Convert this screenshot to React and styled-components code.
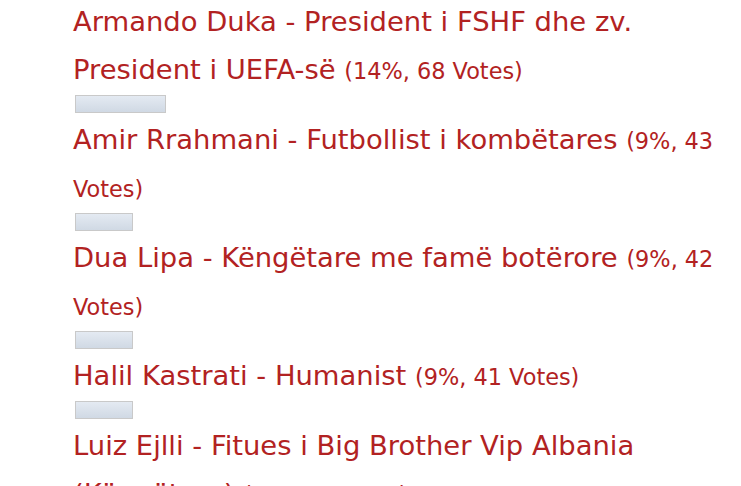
import React from "react";
import styled, { createGlobalStyle } from "styled-components";

const Global = createGlobalStyle`
  html, body { margin: 0; padding: 0; background: #ffffff; }
  body { width: 741px; height: 486px; overflow: hidden; }
`;

const Poll = styled.div`
  margin-top: -2px;
  padding-left: 73px;
  font-family: "DejaVu Sans", Verdana, sans-serif;
  color: #b22222;
`;

const Item = styled.div`
  display: flex;
  flex-direction: column;
  align-items: flex-start;
`;

const Label = styled.div`
  font-size: 27.4px;
  line-height: 48px;
`;

const Votes = styled.span`
  font-size: 22.4px;
  line-height: 1;
`;

const Bar = styled.div`
  box-sizing: border-box;
  height: 18px;
  margin: 1px 0 3px 2px;
  border: 1px solid #c9c9c9;
  background: linear-gradient(#e4eaf2, #d0d9e4);
`;

const results = [
  { label: "Armando Duka - President i FSHF dhe zv. President i UEFA-së", votes: "(14%, 68 Votes)", w: 91 },
  { label: "Amir Rrahmani - Futbollist i kombëtares", votes: "(9%, 43 Votes)", w: 58 },
  { label: "Dua Lipa - Këngëtare me famë botërore", votes: "(9%, 42 Votes)", w: 58 },
  { label: "Halil Kastrati - Humanist", votes: "(9%, 41 Votes)", w: 58 },
  { label: "Luiz Ejlli - Fitues i Big Brother Vip Albania (Këngëtare)", votes: "(8%, 37 Votes)", w: 52 },
];

export default function App() {
  return (
    <>
      <Global />
      <Poll>
        {results.map((r) => (
          <Item key={r.label}>
            <Label>
              {r.label} <Votes>{r.votes}</Votes>
            </Label>
            <Bar style={{ width: r.w }} />
          </Item>
        ))}
      </Poll>
    </>
  );
}
